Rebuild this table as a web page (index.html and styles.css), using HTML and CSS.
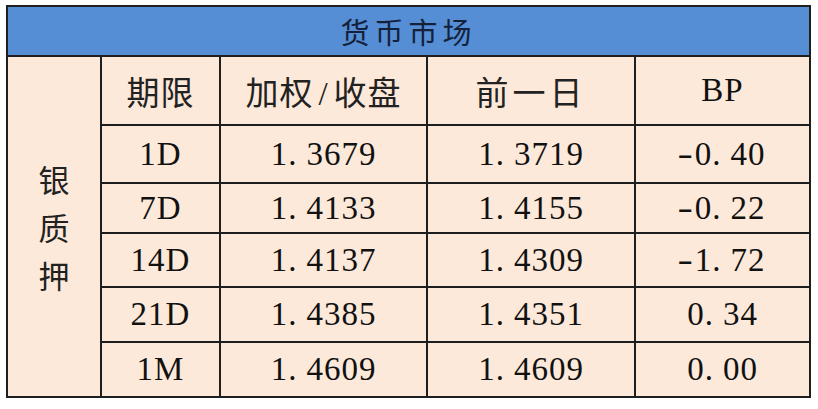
FILE: index.html
```html
<!DOCTYPE html>
<html lang="zh-CN">
<head>
<meta charset="utf-8">
<title>货币市场</title>
<link rel="stylesheet" href="styles.css">
</head>
<body>
<table class="market">
  <colgroup>
    <col class="c-group">
    <col class="c-term">
    <col class="c-rate">
    <col class="c-prev">
    <col class="c-bp">
  </colgroup>
  <tr class="r-title"><th colspan="5" class="title">货币市场</th></tr>
  <tr class="r-head">
    <td rowspan="6" class="group">银<br>质<br>押</td>
    <td class="cjk">期限</td>
    <td class="cjk">加权<span class="slash">/</span>收盘</td>
    <td class="cjk wide">前一日</td>
    <td class="num">BP</td>
  </tr>
  <tr class="r1"><td class="num">1D</td><td class="num">1.<span class="gap"></span>3679</td><td class="num">1.<span class="gap"></span>3719</td><td class="num"><span class="minus">-</span>0.<span class="gap"></span>40</td></tr>
  <tr class="r2"><td class="num">7D</td><td class="num">1.<span class="gap"></span>4133</td><td class="num">1.<span class="gap"></span>4155</td><td class="num"><span class="minus">-</span>0.<span class="gap"></span>22</td></tr>
  <tr class="r3"><td class="num">14D</td><td class="num">1.<span class="gap"></span>4137</td><td class="num">1.<span class="gap"></span>4309</td><td class="num"><span class="minus">-</span>1.<span class="gap"></span>72</td></tr>
  <tr class="r4"><td class="num">21D</td><td class="num">1.<span class="gap"></span>4385</td><td class="num">1.<span class="gap"></span>4351</td><td class="num">0.<span class="gap"></span>34</td></tr>
  <tr class="r5"><td class="num">1M</td><td class="num">1.<span class="gap"></span>4609</td><td class="num">1.<span class="gap"></span>4609</td><td class="num">0.<span class="gap"></span>00</td></tr>
</table>
</body>
</html>
```
FILE: styles.css
```css
html, body {
  margin: 0;
  padding: 0;
  background: #ffffff;
}
body {
  padding: 5px 0 0 6px;
}
.market {
  border-collapse: collapse;
  table-layout: fixed;
  width: 803px;
  background: #fde9d9;
  color: #111111;
  font-family: "Liberation Serif", "Noto Sans CJK SC", serif;
}
.c-group { width: 94px; }
.c-term { width: 119px; }
.c-rate { width: 207px; }
.c-prev { width: 208px; }
.c-bp { width: 175px; }
.market th, .market td {
  border: 2px solid #1e1e1e;
  padding: 0;
  text-align: center;
  vertical-align: middle;
}
.r-title { height: 50px; }
.r-head { height: 69px; }
.r1 { height: 58px; }
.r2 { height: 50px; }
.r3 { height: 54px; }
.r4 { height: 55px; }
.r5 { height: 55px; }
.title {
  background: #558ed5;
  font-family: "Noto Sans CJK SC", sans-serif;
  font-weight: normal;
  font-size: 29px;
  letter-spacing: 5px;
  color: #14213a;
  padding-left: 5px;
}
.group {
  font-family: "Noto Sans CJK SC", sans-serif;
  font-size: 31px;
  line-height: 48px;
  color: #222222;
}
.cjk {
  font-family: "Liberation Serif", "Noto Sans CJK SC", sans-serif;
  font-size: 33px;
  letter-spacing: 1px;
  color: #222222;
}
.wide {
  letter-spacing: 4px;
  padding-left: 4px;
}
.slash {
  display: inline-block;
  padding: 0 5px;
}
.num {
  font-size: 33px;
  letter-spacing: 1px;
}
.gap {
  display: inline-block;
  width: 9px;
}
.minus {
  display: inline-block;
  transform: scaleX(1.4);
  margin-right: 3px;
}
```
